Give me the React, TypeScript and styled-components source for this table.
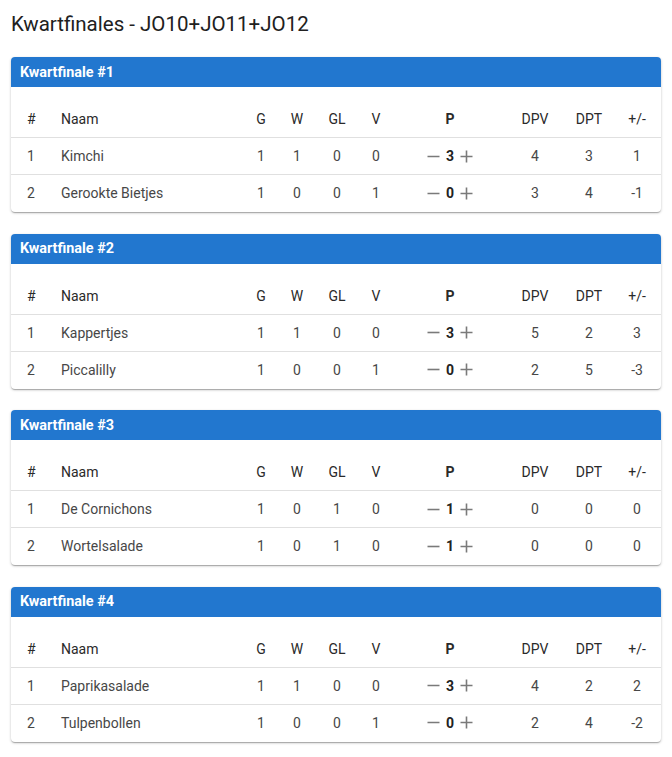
import React from "react";
import styled, { createGlobalStyle } from "styled-components";

const GlobalStyle = createGlobalStyle`
  body {
    margin: 0;
    background: #fff;
    font-family: Roboto, "Liberation Sans", sans-serif;
  }
`;

const Page = styled.div`
  padding: 0 11px 20px 11px;
  width: 650px;
`;

const Title = styled.h2`
  margin: 10px 0 19px 0;
  font-size: 20.5px;
  line-height: 28px;
  font-weight: 400;
  color: #212121;
`;

const Card = styled.div`
  border-radius: 4px;
  overflow: hidden;
  background: #fff;
  box-shadow: 0 1px 3px rgba(0, 0, 0, 0.2), 0 1px 1px rgba(0, 0, 0, 0.14),
    0 2px 1px -1px rgba(0, 0, 0, 0.12);
  margin-bottom: 21.6px;
`;

const CardHeader = styled.div`
  height: 30px;
  background: #2277cf;
  color: #fff;
  font-size: 14.4px;
  font-weight: 700;
  display: flex;
  align-items: center;
  padding-left: 9px;
`;

const Table = styled.div`
  padding-top: 14px;
`;

const Row = styled.div<{ $head?: boolean; $last?: boolean }>`
  display: grid;
  grid-template-columns: 34px 182px 36px 36px 44px 34px 114px 56px 52px 44px;
  padding-left: 16px;
  height: 36px;
  align-items: center;
  font-size: 14px;
  color: ${(p) => (p.$head ? "#2a2a2a" : "#474747")};
  border-bottom: 1px solid ${(p) => (p.$last ? "transparent" : "#e0e0e0")};
`;

const Cell = styled.div<{ $left?: boolean; $bold?: boolean }>`
  text-align: ${(p) => (p.$left ? "left" : "center")};
  font-weight: ${(p) => (p.$bold ? 700 : 400)};
`;

const Points = styled.div`
  display: flex;
  align-items: center;
  justify-content: center;
  gap: 6px;
`;

const Num = styled.span`
  font-weight: 700;
  color: #222;
  min-width: 8px;
  text-align: center;
`;

const IconBtn = styled.span`
  display: inline-flex;
  width: 13px;
  height: 13px;
  align-items: center;
  justify-content: center;
  color: #7a7a7a;
`;

const Minus = () => (
  <IconBtn>
    <svg width="13" height="13" viewBox="0 0 13 13">
      <path d="M0.5 6.5h12" stroke="currentColor" strokeWidth="1.6" />
    </svg>
  </IconBtn>
);

const Plus = () => (
  <IconBtn>
    <svg width="13" height="13" viewBox="0 0 13 13">
      <path d="M0.5 6.5h12M6.5 0.5v12" stroke="currentColor" strokeWidth="1.6" />
    </svg>
  </IconBtn>
);

type Team = [string, number, number, number, number, number, number, number, number];

const games: { title: string; teams: Team[] }[] = [
  {
    title: "Kwartfinale #1",
    teams: [
      ["Kimchi", 1, 1, 0, 0, 3, 4, 3, 1],
      ["Gerookte Bietjes", 1, 0, 0, 1, 0, 3, 4, -1],
    ],
  },
  {
    title: "Kwartfinale #2",
    teams: [
      ["Kappertjes", 1, 1, 0, 0, 3, 5, 2, 3],
      ["Piccalilly", 1, 0, 0, 1, 0, 2, 5, -3],
    ],
  },
  {
    title: "Kwartfinale #3",
    teams: [
      ["De Cornichons", 1, 0, 1, 0, 1, 0, 0, 0],
      ["Wortelsalade", 1, 0, 1, 0, 1, 0, 0, 0],
    ],
  },
  {
    title: "Kwartfinale #4",
    teams: [
      ["Paprikasalade", 1, 1, 0, 0, 3, 4, 2, 2],
      ["Tulpenbollen", 1, 0, 0, 1, 0, 2, 4, -2],
    ],
  },
];

export default function App() {
  return (
    <Page>
      <GlobalStyle />
      <Title>Kwartfinales - JO10+JO11+JO12</Title>
      {games.map((g) => (
        <Card key={g.title}>
          <CardHeader>{g.title}</CardHeader>
          <Table>
            <Row $head>
              <Cell $left>#</Cell>
              <Cell $left>Naam</Cell>
              <Cell>G</Cell>
              <Cell>W</Cell>
              <Cell>GL</Cell>
              <Cell>V</Cell>
              <Cell $bold>P</Cell>
              <Cell>DPV</Cell>
              <Cell>DPT</Cell>
              <Cell>+/-</Cell>
            </Row>
            {g.teams.map((t, i) => (
              <Row key={t[0]} $last={i === g.teams.length - 1}>
                <Cell $left>{i + 1}</Cell>
                <Cell $left>{t[0]}</Cell>
                <Cell>{t[1]}</Cell>
                <Cell>{t[2]}</Cell>
                <Cell>{t[3]}</Cell>
                <Cell>{t[4]}</Cell>
                <Points>
                  <Minus />
                  <Num>{t[5]}</Num>
                  <Plus />
                </Points>
                <Cell>{t[6]}</Cell>
                <Cell>{t[7]}</Cell>
                <Cell>{t[8]}</Cell>
              </Row>
            ))}
          </Table>
        </Card>
      ))}
    </Page>
  );
}
